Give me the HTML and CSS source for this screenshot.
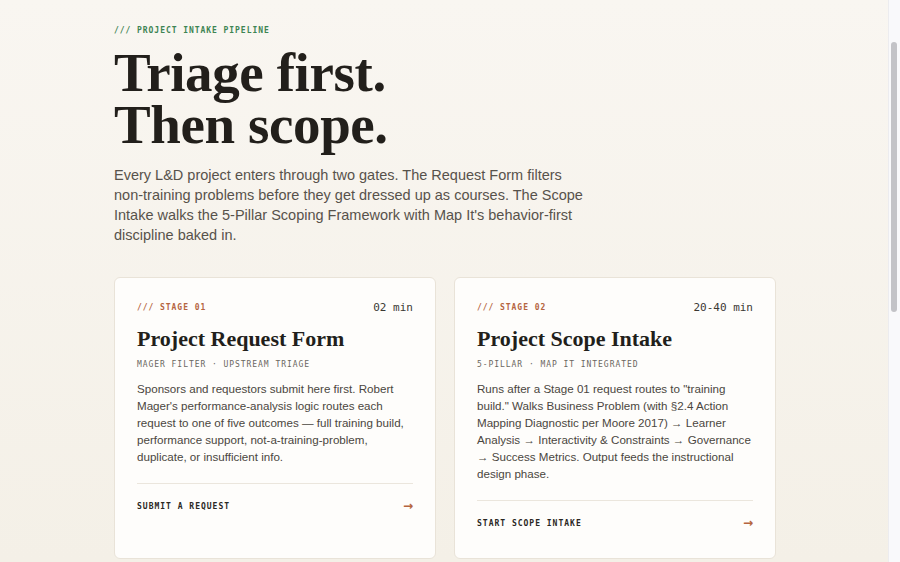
FILE: index.html
```html
<!DOCTYPE html>
<html lang="en">
<head>
<meta charset="utf-8">
<title>Project Intake Pipeline</title>
<link rel="stylesheet" href="styles.css">
</head>
<body>
<main class="page">
  <header class="hero">
    <p class="eyebrow">/// PROJECT INTAKE PIPELINE</p>
    <h1 class="title">Triage first.<br>Then scope.</h1>
    <p class="lede">Every L&amp;D project enters through two gates. The Request Form filters non-training problems before they get dressed up as courses. The Scope Intake walks the 5-Pillar Scoping Framework with Map It's behavior-first discipline baked in.</p>
  </header>
  <section class="cards">
    <article class="card">
      <div class="card-top">
        <span class="stage">/// STAGE 01</span>
        <span class="time">02 min</span>
      </div>
      <h2 class="card-title">Project Request Form</h2>
      <p class="tags">MAGER FILTER · UPSTREAM TRIAGE</p>
      <p class="desc">Sponsors and requestors submit here first. Robert Mager's performance-analysis logic routes each request to one of five outcomes — full training build, performance support, not-a-training-problem, duplicate, or insufficient info.</p>
      <a class="cta" href="#"><span>SUBMIT A REQUEST</span><span class="arrow">→</span></a>
    </article>
    <article class="card">
      <div class="card-top">
        <span class="stage">/// STAGE 02</span>
        <span class="time">20-40 min</span>
      </div>
      <h2 class="card-title">Project Scope Intake</h2>
      <p class="tags">5-PILLAR · MAP IT INTEGRATED</p>
      <p class="desc">Runs after a Stage 01 request routes to "training build." Walks Business Problem (with §2.4 Action Mapping Diagnostic per Moore 2017) → Learner Analysis → Interactivity &amp; Constraints → Governance → Success Metrics. Output feeds the instructional design phase.</p>
      <a class="cta" href="#"><span>START SCOPE INTAKE</span><span class="arrow">→</span></a>
    </article>
  </section>
</main>
<div class="scrollbar" aria-hidden="true"><div class="thumb"></div></div>
</body>
</html>
```
FILE: styles.css
```css
html, body {
  margin: 0;
  padding: 0;
}
body {
  background: linear-gradient(180deg, #f9f6f1 0%, #f4f0e7 560px, #f2ede3 100%);
  color: #23201c;
  font-family: "Liberation Sans", Arial, sans-serif;
  min-height: 1180px;
}
.page {
  width: 662px;
  padding: 26px 0 80px 114px;
}
.eyebrow {
  margin: 0;
  font-family: "DejaVu Sans Mono", monospace;
  font-size: 8px;
  font-weight: bold;
  letter-spacing: 0.95px;
  color: #3d8453;
}
.title {
  margin: 12px 0 0;
  font-family: "Liberation Serif", "Times New Roman", serif;
  font-weight: bold;
  font-size: 55px;
  line-height: 52px;
  letter-spacing: -0.4px;
  color: #221f1b;
}
.lede {
  margin: 14px 0 0;
  width: 480px;
  font-size: 14.5px;
  line-height: 20px;
  color: #57524b;
}
.cards {
  margin-top: 32px;
  display: grid;
  grid-template-columns: 1fr 1fr;
  gap: 18px;
}
.card {
  background: #fefdfb;
  border: 1px solid #e9e3d8;
  border-radius: 6px;
  padding: 23px 22px 28px;
  display: flex;
  flex-direction: column;
}
.card-top {
  display: flex;
  justify-content: space-between;
  align-items: center;
}
.stage {
  font-family: "DejaVu Sans Mono", monospace;
  font-size: 8px;
  font-weight: bold;
  letter-spacing: 0.95px;
  color: #b5653f;
}
.time {
  font-family: "DejaVu Sans Mono", monospace;
  font-size: 11px;
  color: #3b3833;
}
.card-title {
  margin: 11px 0 0;
  font-family: "Liberation Serif", "Times New Roman", serif;
  font-weight: bold;
  font-size: 22px;
  line-height: 28px;
  color: #221f1b;
}
.tags {
  margin: 7px 0 0;
  font-family: "DejaVu Sans Mono", monospace;
  font-size: 8px;
  letter-spacing: 0.95px;
  color: #6b675f;
}
.desc {
  margin: 11px 0 0;
  font-size: 11.6px;
  line-height: 17px;
  color: #4a4640;
}
.cta {
  margin-top: 18px;
  border-top: 1px solid #ebe6dd;
  padding-top: 15px;
  display: flex;
  justify-content: space-between;
  align-items: center;
  text-decoration: none;
  font-family: "DejaVu Sans Mono", monospace;
  font-size: 8px;
  font-weight: bold;
  letter-spacing: 1px;
  color: #2a2723;
}
.arrow {
  font-family: "DejaVu Sans", sans-serif;
  font-size: 12px;
  font-weight: bold;
  letter-spacing: 0;
  color: #b5653f;
}
.scrollbar {
  position: fixed;
  top: 0;
  right: 0;
  width: 11px;
  height: 100%;
  background: #f9f9fb;
  border-left: 1px solid #ececef;
}
.thumb {
  position: absolute;
  top: 42px;
  left: 2px;
  width: 6px;
  height: 270px;
  border-radius: 3px;
  background: #c3c3c7;
}
```
